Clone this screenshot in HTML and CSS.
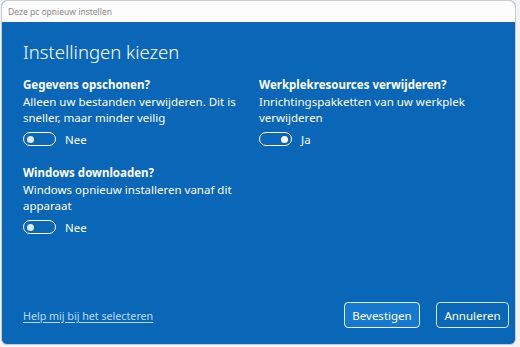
FILE: index.html
```html
<!DOCTYPE html>
<html lang="nl">
<head>
<meta charset="utf-8">
<link rel="stylesheet" href="styles.css">
</head>
<body>
<div class="window">
  <div class="titlebar">Deze pc opnieuw instellen</div>
  <div class="content">
    <h1 class="heading">Instellingen kiezen</h1>
    <div class="grid">
      <div class="option">
        <div class="opt-title">Gegevens opschonen?</div>
        <div class="opt-desc">Alleen uw bestanden verwijderen. Dit is sneller, maar minder veilig</div>
        <div class="toggle-row"><span class="toggle off"><span class="knob"></span></span><span class="toggle-label">Nee</span></div>
      </div>
      <div class="option">
        <div class="opt-title">Werkplekresources verwijderen?</div>
        <div class="opt-desc">Inrichtingspakketten van uw werkplek verwijderen</div>
        <div class="toggle-row"><span class="toggle on"><span class="knob"></span></span><span class="toggle-label">Ja</span></div>
      </div>
      <div class="option">
        <div class="opt-title">Windows downloaden?</div>
        <div class="opt-desc">Windows opnieuw installeren vanaf dit apparaat</div>
        <div class="toggle-row"><span class="toggle off"><span class="knob"></span></span><span class="toggle-label">Nee</span></div>
      </div>
    </div>
    <div class="footer">
      <a class="help" href="#">Help mij bij het selecteren</a>
      <div class="buttons">
        <button class="btn primary">Bevestigen</button>
        <button class="btn">Annuleren</button>
      </div>
    </div>
  </div>
</div>
</body>
</html>
```
FILE: styles.css
```css
html, body {
  margin: 0;
  padding: 0;
  background: #f3f3f3;
  width: 520px;
  height: 347px;
  overflow: hidden;
}
body {
  font-family: "Noto Sans", "Open Sans", sans-serif;
  padding: 0 4px 2px 1px;
  box-sizing: border-box;
}
.window {
  height: 345px;
  border: 1px solid #c9ccd0;
  border-radius: 6px;
  overflow: hidden;
  display: flex;
  flex-direction: column;
  box-sizing: border-box;
  background: #0a67b7;
}
.titlebar {
  height: 21px;
  background: #fdfdfd;
  color: #8a8a8a;
  font-size: 8.5px;
  line-height: 21px;
  padding-left: 6px;
  flex: none;
}
.content {
  flex: 1;
  display: flex;
  flex-direction: column;
  padding: 17px 6px 16px 21px;
  color: #ffffff;
}
.heading {
  margin: 0;
  font-weight: 300;
  font-size: 18.5px;
  line-height: 26px;
}
.grid {
  margin-top: 12px;
  display: grid;
  grid-template-columns: 236px 236px;
  row-gap: 18px;
}
.opt-title {
  font-weight: 700;
  font-size: 11.5px;
  line-height: 16px;
}
.opt-desc {
  margin-top: 1px;
  font-size: 11.5px;
  line-height: 16px;
  max-width: 215px;
}
.toggle-row {
  margin-top: 5px;
  display: flex;
  align-items: center;
  height: 16px;
}
.toggle {
  width: 33px;
  height: 14px;
  border: 1.5px solid #fff;
  border-radius: 9px;
  box-sizing: border-box;
  display: flex;
  align-items: center;
  padding: 0 3px;
}
.toggle .knob {
  width: 7px;
  height: 7px;
  border-radius: 50%;
  background: #fff;
}
.toggle.off .knob { background: #dfe9f3; }
.toggle.on { justify-content: flex-end; }
.toggle-label {
  margin-left: 9px;
  font-size: 11.5px;
}
.footer {
  margin-top: auto;
  display: flex;
  align-items: center;
  justify-content: space-between;
}
.help {
  color: #b7dcfb;
  font-size: 10.8px;
  letter-spacing: -0.05px;
  text-decoration: underline;
  text-underline-offset: 2px;
}
.buttons {
  display: flex;
  gap: 16px;
}
.btn {
  font-family: inherit;
  font-size: 11.5px;
  color: #fff;
  background: #0a67b7;
  border: 1.5px solid #cfe8fb;
  border-radius: 4px;
  height: 26px;
  padding: 0 6px;
}
.btn.primary {
  background: #1679d0;
  border-color: #e8f3fd;
  width: 76px;
}
.btn:not(.primary) { width: 73px; }
```
